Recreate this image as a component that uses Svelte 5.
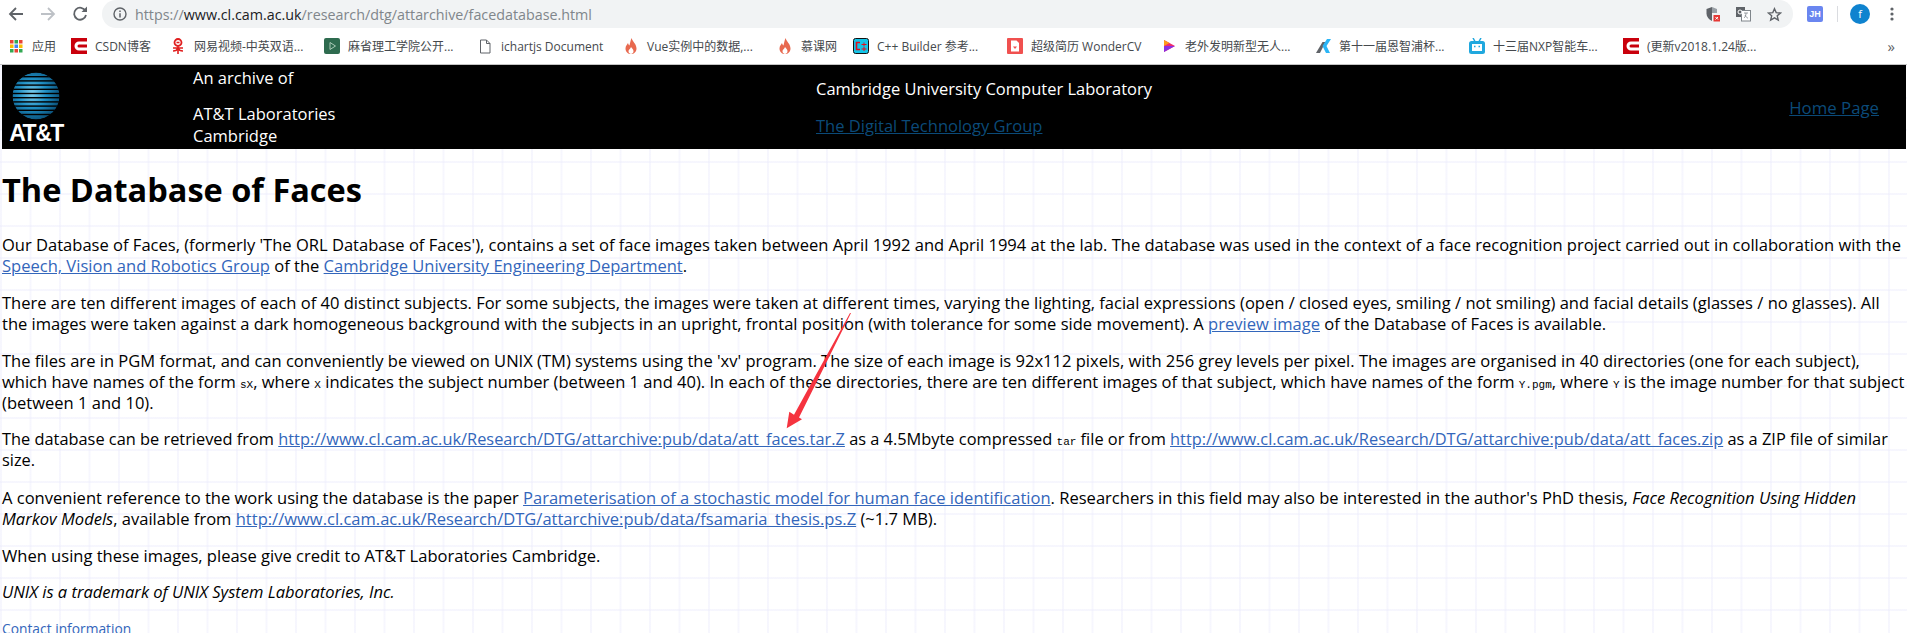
<script>
    // bookmark bar entries, width = fixed slot of the item in the bar
    const bookmarks = [
        { kind: "apps", label: "应用", width: 63 },
        { kind: "csdn", label: "CSDN博客", width: 99 },
        { kind: "netease", label: "网易视频-中英双语...", width: 154 },
        { kind: "mit", label: "麻省理工学院公开...", width: 153 },
        { kind: "doc", label: "ichartjs Document", width: 146 },
        { kind: "flame", label: "Vue实例中的数据,...", width: 154 },
        { kind: "flame", label: "慕课网", width: 76 },
        { kind: "cpp", label: "C++ Builder 参考...", width: 154 },
        { kind: "cv", label: "超级简历 WonderCV", width: 154 },
        { kind: "play", label: "老外发明新型无人...", width: 154 },
        { kind: "k", label: "第十一届恩智浦杯...", width: 154 },
        { kind: "bili", label: "十三届NXP智能车...", width: 154 },
        { kind: "csdn", label: "(更新v2018.1.24版...", width: 154 }
    ];
    const stripes = [4, 8.200, 12.400, 16.600, 20.800, 25, 29.200, 33.400, 37.600, 41.800];
</script>

<div class="toolbar">
    <div class="nav">
        <svg width="16" height="16" viewBox="0 0 16 16"><path d="M15 8H2.500M8 2 2 8l6 6" fill="none" stroke="#5f6368" stroke-width="1.800"/></svg>
        <svg width="16" height="16" viewBox="0 0 16 16"><path d="M1 8h12.500M8 2l6 6-6 6" fill="none" stroke="#bdc1c6" stroke-width="1.800"/></svg>
        <svg width="16" height="16" viewBox="0 0 16 16"><path d="M13.500 5A6 6 0 1 0 14 9" fill="none" stroke="#5f6368" stroke-width="1.800"/><path d="M9.500 6H15V.500z" fill="#5f6368"/></svg>
    </div>
    <div class="omnibox">
        <svg class="info" width="14" height="14" viewBox="0 0 14 14"><circle cx="7" cy="7" r="6" fill="none" stroke="#5f6368" stroke-width="1.400"/><path d="M7 6.200v4.300M7 3.500v1.500" stroke="#5f6368" stroke-width="1.500"/></svg>
        <span class="url"><span class="muted">https://</span>www.cl.cam.ac.uk<span class="muted">/research/dtg/attarchive/facedatabase.html</span></span>
        <div class="omni-icons">
            <svg width="14" height="16" viewBox="0 0 14 16"><path d="M6 1 .5 3v4.500C.5 11 3 13.500 6 15z" fill="#5f6368"/><path d="M6 1l5 2v4H6z" fill="#9aa0a6"/><rect x="7.500" y="9" width="6.500" height="6.500" fill="#e53935"/><path d="M9.500 11l2.500 2.500M12 11l-2.500 2.500" stroke="#fff"/></svg>
            <svg width="15" height="16" viewBox="0 0 15 16"><rect x="0" y="1" width="9" height="10" fill="#5f6368"/><rect x="5.500" y="4.500" width="9" height="10.500" fill="#fff" stroke="#80868b"/><circle cx="4" cy="6" r="2" fill="none" stroke="#fff"/><path d="M8 7h4M10 7c0 3-1 4-2 5M9 9c1 2 2 3 3 3" stroke="#80868b" fill="none" stroke-width=".8"/></svg>
            <svg width="15" height="15" viewBox="0 0 16 16"><path d="M8 1.800 9.800 6l4.700.400-3.600 3 1.100 4.600L8 11.600 3.900 14 5 9.400l-3.600-3L6.200 6z" fill="none" stroke="#5f6368" stroke-width="1.500"/></svg>
        </div>
    </div>
    <div class="extensions">
        <span class="jh">JH</span>
        <span class="divider"></span>
        <span class="avatar">f</span>
        <svg width="4" height="14" viewBox="0 0 4 14"><circle cx="2" cy="2" r="1.600" fill="#5f6368"/><circle cx="2" cy="7" r="1.600" fill="#5f6368"/><circle cx="2" cy="12" r="1.600" fill="#5f6368"/></svg>
    </div>
</div>

<div class="bookmarks">
    {#each bookmarks as b}
        <div class="bookmark" style="width: {b.width}px">
            <span class="icon">
                {#if b.kind === "apps"}
                    <svg width="13" height="13" viewBox="0 0 13 13">
                        {#each [0, 4.500, 9] as y, r}
                            {#each [0, 4.500, 9] as x, c}
                                <rect {x} {y} width="3.500" height="3.500" fill={["#ea4335", "#fbbc05", "#34a853", "#4285f4"][(r + c * 2) % 4]} />
                            {/each}
                        {/each}
                    </svg>
                {:else if b.kind === "csdn"}
                    <svg width="16" height="16" viewBox="0 0 16 16"><rect width="16" height="16" fill="#c9000c"/><path d="M16 5H8a3 3 0 0 0 0 6h8" fill="none" stroke="#fff" stroke-width="3"/></svg>
                {:else if b.kind === "netease"}
                    <svg width="12" height="16" viewBox="0 0 12 16"><circle cx="6" cy="4.500" r="3.500" fill="none" stroke="#e01f1f" stroke-width="1.800"/><path d="M4.500 4.500h3M1 10h10M6 8.500V16M1 13c2 0 4-.5 5-3M11 13c-2 0-4-.5-5-3" stroke="#e01f1f" stroke-width="1.600" fill="none"/></svg>
                {:else if b.kind === "mit"}
                    <svg width="16" height="16" viewBox="0 0 16 16"><rect width="16" height="16" rx="2" fill="#2e6b4f"/><path d="M6 4.500 11.500 8 6 11.500z" fill="none" stroke="#a9c9b6"/></svg>
                {:else if b.kind === "doc"}
                    <svg width="12" height="15" viewBox="0 0 12 15"><path d="M1.500 1H7.500L11 4.500V14H1.500zM7.500 1V4.500H11" fill="none" stroke="#5f6368"/></svg>
                {:else if b.kind === "flame"}
                    <svg width="12" height="16" viewBox="0 0 12 16"><path d="M6.500 0C7.500 3.500 11.500 6 11.500 10.500 11.500 14 9 16 6 16S.5 14 .5 10.500C.5 8 2 6.500 3 5c.3 1.200.7 2 1.500 2.500C5 5 5.500 3 6.500 0z" fill="#e8694f"/><path d="M6 9c1 1.500 2.500 2.500 2.500 4.200S7 16 6 16s-2.500-1-2.500-2.800S5.500 11 6 9z" fill="#fff"/></svg>
                {:else if b.kind === "cpp"}
                    <svg width="16" height="16" viewBox="0 0 16 16"><rect x=".5" y=".5" width="15" height="15" rx="2" fill="#12c5e8" stroke="#111"/><path d="M7 4.500H3.500v7H7" fill="none" stroke="#e0101c" stroke-width="1.600"/><path d="M8.500 6.500h5M11 4.500v4M8.500 11h5M11 9v4" stroke="#e0101c"/></svg>
                {:else if b.kind === "cv"}
                    <svg width="16" height="16" viewBox="0 0 16 16"><rect width="16" height="16" rx="1" fill="#f0504f"/><path d="M4 2.500h5.500L12 5v8.500H4z" fill="#fff"/><path d="M6 8.500 8 11l2-2.500z" fill="#f0504f"/></svg>
                {:else if b.kind === "play"}
                    <svg width="14" height="16" viewBox="0 0 14 16"><path d="M2 2 13 8 2 14z" fill="#f02b6b"/><path d="M2 8 13 8 2 14z" fill="#8b2fe0"/><path d="M2 2 7.500 5 2 8z" fill="#ff9b1a"/></svg>
                {:else if b.kind === "k"}
                    <svg width="16" height="14" viewBox="0 0 16 14"><path d="M1 14 7.500 3h3L5 14z" fill="#5f6368"/><path d="M12 0h4L11.500 7 15 14h-4L7.500 7z" fill="#2ab5f6"/></svg>
                {:else if b.kind === "bili"}
                    <svg width="16" height="16" viewBox="0 0 16 16"><path d="M4 0l2 3.500M12 0l-2 3.500" stroke="#20a8de" stroke-width="1.500"/><rect x="0" y="3" width="16" height="13" rx="2.500" fill="#20a8de"/><rect x="3" y="6" width="10" height="7" fill="#fff"/><path d="M5 8.500h1.500M9.500 8.500H11" stroke="#20a8de" stroke-width="1.500"/></svg>
                {/if}
            </span>
            <span>{b.label}</span>
        </div>
    {/each}
    <span class="more">»</span>
</div>

<div class="page">
    <div class="banner">
        <div class="logo">
            <svg width="48" height="48" viewBox="0 0 48 48">
                <defs>
                    <radialGradient id="globe" cx="0.420" cy="0.450" r="0.600">
                        <stop offset="0" stop-color="#7fd0ee"/>
                        <stop offset="0.500" stop-color="#1f8fc4"/>
                        <stop offset="1" stop-color="#0a4f78"/>
                    </radialGradient>
                    <clipPath id="ball"><circle cx="24" cy="24" r="23.500"/></clipPath>
                </defs>
                <g clip-path="url(#ball)">
                    <circle cx="24" cy="24" r="23.500" fill="url(#globe)"/>
                    {#each stripes as y}
                        <rect x="0" y={y} width="48" height="1.400" fill="#000"/>
                    {/each}
                </g>
            </svg>
            <span class="logo-name">AT&amp;T</span>
        </div>
        <div class="archive">
            <p>An archive of</p>
            <p>AT&amp;T Laboratories<br />Cambridge</p>
        </div>
        <div class="lab">
            <p>Cambridge University Computer Laboratory</p>
            <p><a href="#dtg">The Digital Technology Group</a></p>
        </div>
        <div class="home"><a href="#home">Home Page</a></div>
    </div>

    <h1>The Database of Faces</h1>

    <p>Our Database of Faces, (formerly 'The ORL Database of Faces'), contains a set of face images taken between April 1992 and April 1994 at the lab. The database was used in the context of a face recognition project carried out in collaboration with the <a href="#svr">Speech, Vision and Robotics Group</a> of the <a href="#cued">Cambridge University Engineering Department</a>.</p>

    <p>There are ten different images of each of 40 distinct subjects. For some subjects, the images were taken at different times, varying the lighting, facial expressions (open / closed eyes, smiling / not smiling) and facial details (glasses / no glasses). All the images were taken against a dark homogeneous background with the subjects in an upright, frontal position (with tolerance for some side movement). A <a href="#preview">preview image</a> of the Database of Faces is available.</p>

    <p>The files are in PGM format, and can conveniently be viewed on UNIX (TM) systems using the 'xv' program. The size of each image is 92x112 pixels, with 256 grey levels per pixel. The images are organised in 40 directories (one for each subject), which have names of the form <code>sX</code>, where <code>X</code> indicates the subject number (between 1 and 40). In each of these directories, there are ten different images of that subject, which have names of the form <code>Y.pgm</code>, where <code>Y</code> is the image number for that subject (between 1 and 10).</p>

    <p class="urls">The database can be retrieved from <a href="#tar">http://www.cl.cam.ac.uk/Research/DTG/attarchive:pub/data/att_faces.tar.Z</a> as a 4.5Mbyte compressed <code>tar</code> file or from <a href="#zip">http://www.cl.cam.ac.uk/Research/DTG/attarchive:pub/data/att_faces.zip</a> as a ZIP file of similar size.</p>

    <p>A convenient reference to the work using the database is the paper <a href="#paper">Parameterisation of a stochastic model for human face identification</a>. Researchers in this field may also be interested in the author's PhD thesis, <i>Face Recognition Using Hidden Markov Models</i>, available from <a href="#thesis">http://www.cl.cam.ac.uk/Research/DTG/attarchive:pub/data/fsamaria_thesis.ps.Z</a> (~1.7 MB).</p>

    <p>When using these images, please give credit to AT&amp;T Laboratories Cambridge.</p>

    <p><i>UNIX is a trademark of UNIX System Laboratories, Inc.</i></p>

    <p class="contact"><a href="#contact">Contact information</a></p>

    <!-- roter Pfeil liegt über dem Text -->
    <svg class="arrow" width="70" height="120" viewBox="0 0 70 120">
        <path d="M66 0 14 104.500 17 106.300 1.700 115.300 4.300 98.700 9 101.800 65 0z" fill="#f5333f"/>
    </svg>
</div>

<style>
    :global(body) {
        margin: 0;
        height: 633px;
        overflow: hidden;
        background: #fff;
        font-family: "Open Sans", "Noto Sans CJK SC", sans-serif;
    }

    .toolbar {
        height: 28px;
        display: flex;
        align-items: center;
        padding-left: 8px;
        background: #fff;
    }

    .nav {
        display: flex;
        gap: 16px;
        width: 94px;
        flex: none;
    }

    .omnibox {
        width: 1691px;
        height: 28px;
        flex: none;
        box-sizing: border-box;
        background: #f1f3f4;
        border-radius: 14px;
        display: flex;
        align-items: center;
        padding-left: 11px;
        padding-right: 11px;
    }

    .info {
        margin-right: 8px;
    }

    .url {
        flex: 1;
        font-size: 14.300px;
        color: #202124;
    }

    .muted {
        color: #80868b;
    }

    .omni-icons {
        display: flex;
        align-items: center;
        gap: 16px;
    }

    .extensions {
        flex: none;
        display: flex;
        align-items: center;
        margin-left: 14px;
    }

    .jh {
        width: 16px;
        height: 16px;
        background: #6a86f0;
        border-radius: 2px;
        color: #fff;
        font: bold 9px/16px "Liberation Sans", sans-serif;
        text-align: center;
    }

    .divider {
        width: 1px;
        height: 16px;
        background: #dadce0;
        margin: 0 12px 0 14px;
    }

    .avatar {
        width: 20px;
        height: 20px;
        border-radius: 50%;
        background: #0f83cf;
        color: #fff;
        font: 11px/20px "Open Sans", sans-serif;
        text-align: center;
        margin-right: 20px;
    }

    .bookmarks {
        height: 37px;
        box-sizing: border-box;
        border-bottom: 1px solid #c4c4c4;
        display: flex;
        align-items: center;
        padding: 0 12px 0 8px;
        font-size: 12px;
        color: #45494d;
        white-space: nowrap;
    }

    .bookmark {
        display: flex;
        align-items: center;
        gap: 8px;
        flex: none;
    }

    .icon {
        display: flex;
        justify-content: center;
        width: 16px;
    }

    .more {
        margin-left: auto;
        font-size: 15px;
        color: #5f6368;
    }

    .page {
        position: relative;
        padding: 0 0 0 2px;
        height: 568px;
        overflow: hidden;
        font-size: 16.550px;
        line-height: 21.330px;
        color: #000;
        background-color: #fff;
        background-image:
            linear-gradient(rgba(236, 236, 252, 0.45) 2px, transparent 2px),
            linear-gradient(90deg, rgba(236, 236, 252, 0.45) 2px, transparent 2px);
        background-size: 29.500px 32px;
    }

    .banner {
        height: 84px;
        margin-right: 1px;
        background: #000;
        color: #fff;
        font-size: 16.500px;
        display: grid;
        grid-template-columns: 191px 623px 1fr auto;
    }

    .banner p {
        margin: 0;
    }

    .banner a {
        color: #0b4a78;
    }

    .logo {
        display: flex;
        flex-direction: column;
        align-items: center;
        width: 56px;
        padding-top: 7px;
        margin-left: 6px;
    }

    .logo-name {
        font: bold 23px/20px "Liberation Sans", sans-serif;
        letter-spacing: -1.500px;
        margin-top: 3px;
    }

    .archive {
        padding-top: 2px;
    }

    .archive p + p {
        margin-top: 15px;
    }

    .lab {
        padding-top: 13px;
    }

    .lab p + p {
        margin-top: 16px;
    }

    .home {
        align-self: center;
        padding-right: 27px;
        padding-top: 1px;
        font-size: 16.800px;
    }

    h1 {
        margin: 19px 0 22px;
        font-size: 32.500px;
        line-height: 44px;
        font-weight: bold;
    }

    p {
        margin: 0 0 15.200px;
    }

    .urls {
        font-size: 16.380px;
    }

    a {
        color: #3366bb;
    }

    code {
        font-family: "Liberation Mono", monospace;
        font-size: 11px;
        line-height: 0;
    }

    .contact {
        font-size: 13.800px;
    }

    .contact a {
        text-decoration: none;
    }

    .arrow {
        position: absolute;
        left: 785px;
        top: 248px;
    }
</style>
